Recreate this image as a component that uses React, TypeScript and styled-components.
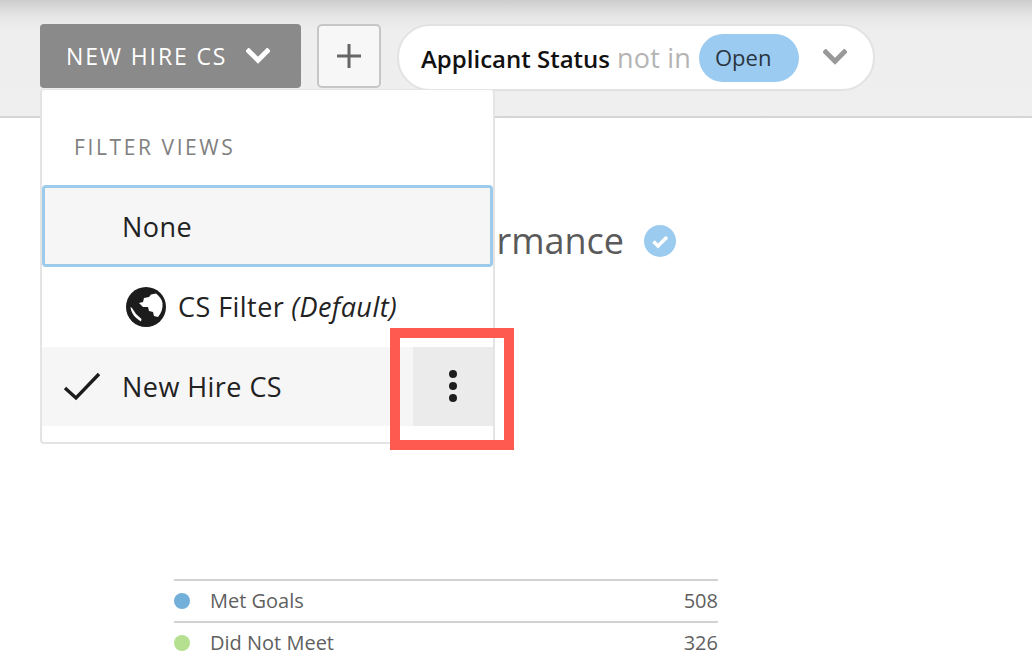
import React from "react";
import styled, { createGlobalStyle } from "styled-components";

const GlobalStyle = createGlobalStyle`
  html, body {
    margin: 0;
    padding: 0;
    background: #fff;
    font-family: "Open Sans", "Liberation Sans", sans-serif;
  }
`;

const Page = styled.div`
  width: 1032px;
  height: 652px;
  overflow: hidden;
  background: #fff;
`;

const Header = styled.header`
  position: relative;
  height: 118px;
  box-sizing: border-box;
  padding: 24px 0 0 40px;
  border-bottom: 2px solid #d4d4d4;
  background: linear-gradient(#cdcdcd 0, #e6e6e6 16px, #eeeeee 30px, #efefef 100%);
`;

const Toolbar = styled.div`
  display: flex;
  align-items: flex-start;
`;

const ViewButton = styled.div`
  width: 261px;
  height: 64px;
  border-radius: 4px;
  background: #8a8a8a;
  color: #fff;
  display: flex;
  align-items: center;
  padding-left: 26px;
  box-sizing: border-box;
  font-size: 23px;
  font-weight: 500;
  letter-spacing: 1.87px;
  gap: 19px;
`;

const AddButton = styled.div`
  width: 64px;
  height: 64px;
  margin-left: 16px;
  box-sizing: border-box;
  border: 2px solid #c6c6c6;
  border-radius: 5px;
  background: #f7f7f7;
  display: flex;
  align-items: center;
  justify-content: center;
`;

const FilterPill = styled.div`
  width: 478px;
  height: 67px;
  margin-left: 16px;
  box-sizing: border-box;
  border: 2px solid #e2e2e2;
  border-radius: 33px;
  background: #fff;
  display: flex;
  align-items: center;
  padding-left: 22px;
  font-size: 24px;
`;

const FilterName = styled.span`
  color: #111;
  font-weight: 600;
  padding-top: 2px;
`;

const FilterOp = styled.span`
  color: #b4b4b4;
  margin-left: 7px;
  font-size: 27px;
  letter-spacing: 0.2px;
`;

const Tag = styled.span`
  width: 100px;
  height: 48px;
  margin-left: 8px;
  border-radius: 24px;
  background: #9bcbf0;
  color: #2a3540;
  font-size: 22px;
  display: flex;
  align-items: center;
  padding-left: 16px;
  padding-bottom: 2px;
  box-sizing: border-box;
`;

const PillChevron = styled.span`
  display: flex;
  margin-left: 24px;
  margin-top: -1px;
`;

const Menu = styled.div`
  position: absolute;
  left: 40px;
  top: 89px;
  width: 455px;
  height: 355px;
  box-sizing: border-box;
  background: #fff;
  border: 2px solid #e4e4e4;
  border-top-width: 1px;
  border-radius: 4px;
  z-index: 2;
`;

const MenuTitle = styled.div`
  height: 95px;
  box-sizing: border-box;
  padding: 43px 0 0 32px;
  font-size: 21px;
  line-height: 28px;
  letter-spacing: 2.6px;
  color: #808080;
`;

const MenuRow = styled.div<{ $focused?: boolean; $active?: boolean }>`
  height: ${(p) => (p.$focused ? 82 : p.$active ? 79 : 80)}px;
  box-sizing: border-box;
  display: flex;
  align-items: center;
  position: relative;
  padding-left: ${(p) => (p.$focused ? 77 : 80)}px;
  padding-bottom: ${(p) => (p.$focused ? 0 : 1)}px;
  font-size: 27px;
  letter-spacing: 0.45px;
  color: #222;
  background: ${(p) => (p.$focused || p.$active ? "#f6f6f6" : "#fff")};
  border: ${(p) => (p.$focused ? "3px solid #9ccbec" : "none")};
  border-radius: ${(p) => (p.$focused ? "4px" : "0")};
`;

const GlobeWrap = styled.span`
  display: flex;
  margin-left: 4px;
  margin-right: 12px;
`;

const Em = styled.em`
  margin-left: 7px;
`;

const CheckWrap = styled.span`
  position: absolute;
  left: 21px;
  top: 25px;
  display: flex;
`;

const MoreButton = styled.div`
  position: absolute;
  right: 0;
  top: 0;
  width: 80px;
  height: 100%;
  padding-bottom: 2px;
  box-sizing: border-box;
  background: #ebebeb;
  display: flex;
  flex-direction: column;
  align-items: center;
  justify-content: center;
  gap: 4px;
`;

const Dot = styled.span`
  width: 8px;
  height: 8px;
  border-radius: 50%;
  background: #1e1e1e;
`;

const Highlight = styled.div`
  position: absolute;
  left: 390px;
  top: 328px;
  width: 124px;
  height: 122px;
  box-sizing: border-box;
  border: 10px solid #ff5a4f;
  z-index: 3;
`;

const Content = styled.main`
  padding-left: 174px;
`;

const TitleRow = styled.div`
  display: flex;
  align-items: center;
  justify-content: flex-end;
  width: 502px;
  height: 46px;
  margin-top: 100px;
  font-size: 36px;
  line-height: 44px;
  color: #5a5a5a;
  gap: 20px;
`;

const Legend = styled.div`
  width: 544px;
  margin-top: 315px;
`;

const LegendRow = styled.div`
  height: 42px;
  box-sizing: border-box;
  border-top: 2px solid #d2d2d2;
  display: flex;
  align-items: center;
  font-size: 20px;
  line-height: 16px;
  color: #5f5f5f;
`;

const LegendDot = styled.span<{ $color: string }>`
  width: 16px;
  height: 16px;
  border-radius: 50%;
  background: ${(p) => p.$color};
  margin-right: 20px;
`;

const LegendCount = styled.span`
  margin-left: auto;
`;

const Chevron = ({ color, width }: { color: string; width: number }) => (
  <svg width={width} height={width * 0.65} viewBox="0 0 24 16" fill="none">
    <path d="M2.5 3 L12 12.5 L21.5 3" stroke={color} strokeWidth="5" strokeLinecap="square" />
  </svg>
);

const Globe = () => (
  <svg width="40" height="40" viewBox="0 0 40 40">
    <circle cx="20" cy="20" r="20" fill="#1c1c1c" />
    <path
      d="M13 16 L17 15 L18 11 L23 10 L25 7.5 L30 6.5 C33 9 36 12 36.5 16 C37 21 35.5 26 32 30 L28 29 L27 25 L23 24 L22 20 L17 20 L15 18 Z"
      fill="#fff"
    />
    <path d="M4.5 20 C5 26 9 31 15 34.5 L15.5 32 L10 27 L6 21 Z" fill="#fff" />
  </svg>
);

export default function App() {
  return (
    <Page>
      <GlobalStyle />
      <Header>
        <Toolbar>
          <ViewButton>
            NEW HIRE CS
            <Chevron color="#fff" width={24} />
          </ViewButton>
          <AddButton>
            <svg width="26" height="26" viewBox="0 0 26 26">
              <path d="M13 1 V25 M1 13 H25" stroke="#666" strokeWidth="3" fill="none" />
            </svg>
          </AddButton>
          <FilterPill>
            <FilterName>Applicant Status</FilterName>
            <FilterOp>not in</FilterOp>
            <Tag>Open</Tag>
            <PillChevron>
              <Chevron color="#999" width={24} />
            </PillChevron>
          </FilterPill>
        </Toolbar>
        <Menu>
          <MenuTitle>FILTER VIEWS</MenuTitle>
          <MenuRow $focused>None</MenuRow>
          <MenuRow>
            <GlobeWrap>
              <Globe />
            </GlobeWrap>
            CS Filter <Em>(Default)</Em>
          </MenuRow>
          <MenuRow $active>
            <CheckWrap>
              <svg width="38" height="30" viewBox="0 0 38 30" fill="none">
                <path d="M2 16 L13 26 L36 2" stroke="#1c1c1c" strokeWidth="3.4" />
              </svg>
            </CheckWrap>
            New Hire CS
            <MoreButton>
              <Dot />
              <Dot />
              <Dot />
            </MoreButton>
          </MenuRow>
        </Menu>
        <Highlight />
      </Header>
      <Content>
        <TitleRow>
          <span>Performance</span>
          <svg width="32" height="32" viewBox="0 0 32 32">
            <circle cx="16" cy="16" r="16" fill="#9ccbf0" />
            <path d="M9.5 16.5 L14 21 L23 12" stroke="#fff" strokeWidth="3.4" fill="none" />
          </svg>
        </TitleRow>
        <Legend>
          <LegendRow>
            <LegendDot $color="#72afd9" />
            Met Goals
            <LegendCount>508</LegendCount>
          </LegendRow>
          <LegendRow>
            <LegendDot $color="#b5e08f" />
            Did Not Meet
            <LegendCount>326</LegendCount>
          </LegendRow>
        </Legend>
      </Content>
    </Page>
  );
}
